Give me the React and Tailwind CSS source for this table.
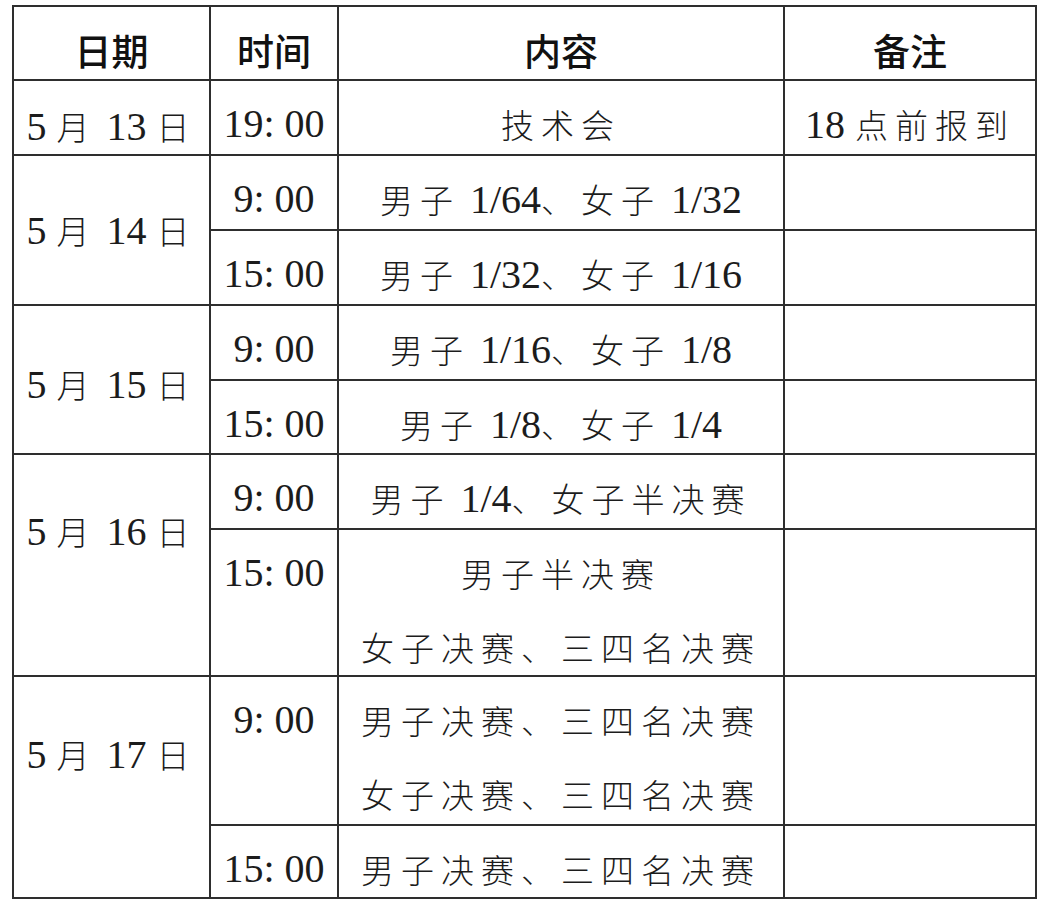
import React from "react";

// split text into CJK / latin runs so the CJK glyphs get their own size and spacing
const Txt = ({ text }) => {
  const parts = text.split(/([\u3000-\u303f\u4e00-\u9fff\uff00-\uffef]+)/).filter(Boolean);
  return (
    <>
      {parts.map((p, i) =>
        /[\u3000-\u303f\u4e00-\u9fff\uff00-\uffef]/.test(p) ? (
          <span key={i} lang="zh-CN" className="font-['Noto_Sans_CJK_SC',sans-serif] font-light text-[33px] tracking-[7px]">
            {p}
          </span>
        ) : (
          <span key={i} lang="en" className="font-['Liberation_Serif','Times_New_Roman',serif] font-normal text-[40px]">
            {p}
          </span>
        )
      )}
    </>
  );
};

const cell = "border-r-2 border-b-2 border-[#2e2e2e] flex justify-center";

// one text line, fixed at 74px so mixed fonts don't stretch it
const Row = ({ text }) => (
  <div className="h-[74px] leading-[74px] whitespace-pre text-center">
    <Txt text={text} />
  </div>
);

const Head = ({ children }) => (
  <div className={`${cell} items-start pt-[6px]`}>
    <div lang="zh-CN" className="h-[74px] leading-[74px] font-['Noto_Sans_CJK_SC',sans-serif] font-medium text-[37px] text-[#111]">
      {children}
    </div>
  </div>
);

const Line = ({ text, extra = "pt-[6px]" }) => (
  <div className={`${cell} items-start ${extra}`}>
    <Row text={text} />
  </div>
);

const Lines = ({ lines }) => (
  <div className={`${cell} items-start pt-[6px]`}>
    <div className="flex flex-col items-center">
      {lines.map((l) => (
        <Row key={l} text={l} />
      ))}
    </div>
  </div>
);

const DateCell = ({ text, extra }) => (
  <div className={`${cell} row-span-2 items-center ${extra}`}>
    <Row text={text} />
  </div>
);

const Empty = () => <div className={cell} />;

export default function App() {
  return (
    <div className="min-h-screen bg-white pt-[5px] pl-[12px]">
      <div className="grid w-max grid-cols-[197px_128px_446px_252px] grid-rows-[74px_75px_75px_75px_75px_74px_75px_147px_149px_73px] border-t-2 border-l-2 border-[#2e2e2e] text-[#1c1c1c]">
        <Head>日期</Head>
        <Head>时间</Head>
        <Head>内容</Head>
        <Head>备注</Head>

        <Line text="5 月 13 日" extra="pt-[8px]" />
        <Line text="19: 00" />
        <Line text="技术会" />
        <Line text="18 点前报到" />

        <DateCell text="5 月 14 日" extra="" />
        <Line text="9: 00" />
        <Line text="男子 1/64、女子 1/32" />
        <Empty />
        <Line text="15: 00" />
        <Line text="男子 1/32、女子 1/16" />
        <Empty />

        <DateCell text="5 月 15 日" extra="pt-[8px]" />
        <Line text="9: 00" />
        <Line text="男子 1/16、女子 1/8" />
        <Empty />
        <Line text="15: 00" />
        <Line text="男子 1/8、女子 1/4" />
        <Empty />

        <DateCell text="5 月 16 日" extra="pb-[68px]" />
        <Line text="9: 00" />
        <Line text="男子 1/4、女子半决赛" />
        <Empty />
        <Line text="15: 00" />
        <Lines lines={["男子半决赛", "女子决赛、三四名决赛"]} />
        <Empty />

        <DateCell text="5 月 17 日" extra="pb-[66px]" />
        <Line text="9: 00" />
        <Lines lines={["男子决赛、三四名决赛", "女子决赛、三四名决赛"]} />
        <Empty />
        <Line text="15: 00" />
        <Line text="男子决赛、三四名决赛" />
        <Empty />
      </div>
    </div>
  );
}
